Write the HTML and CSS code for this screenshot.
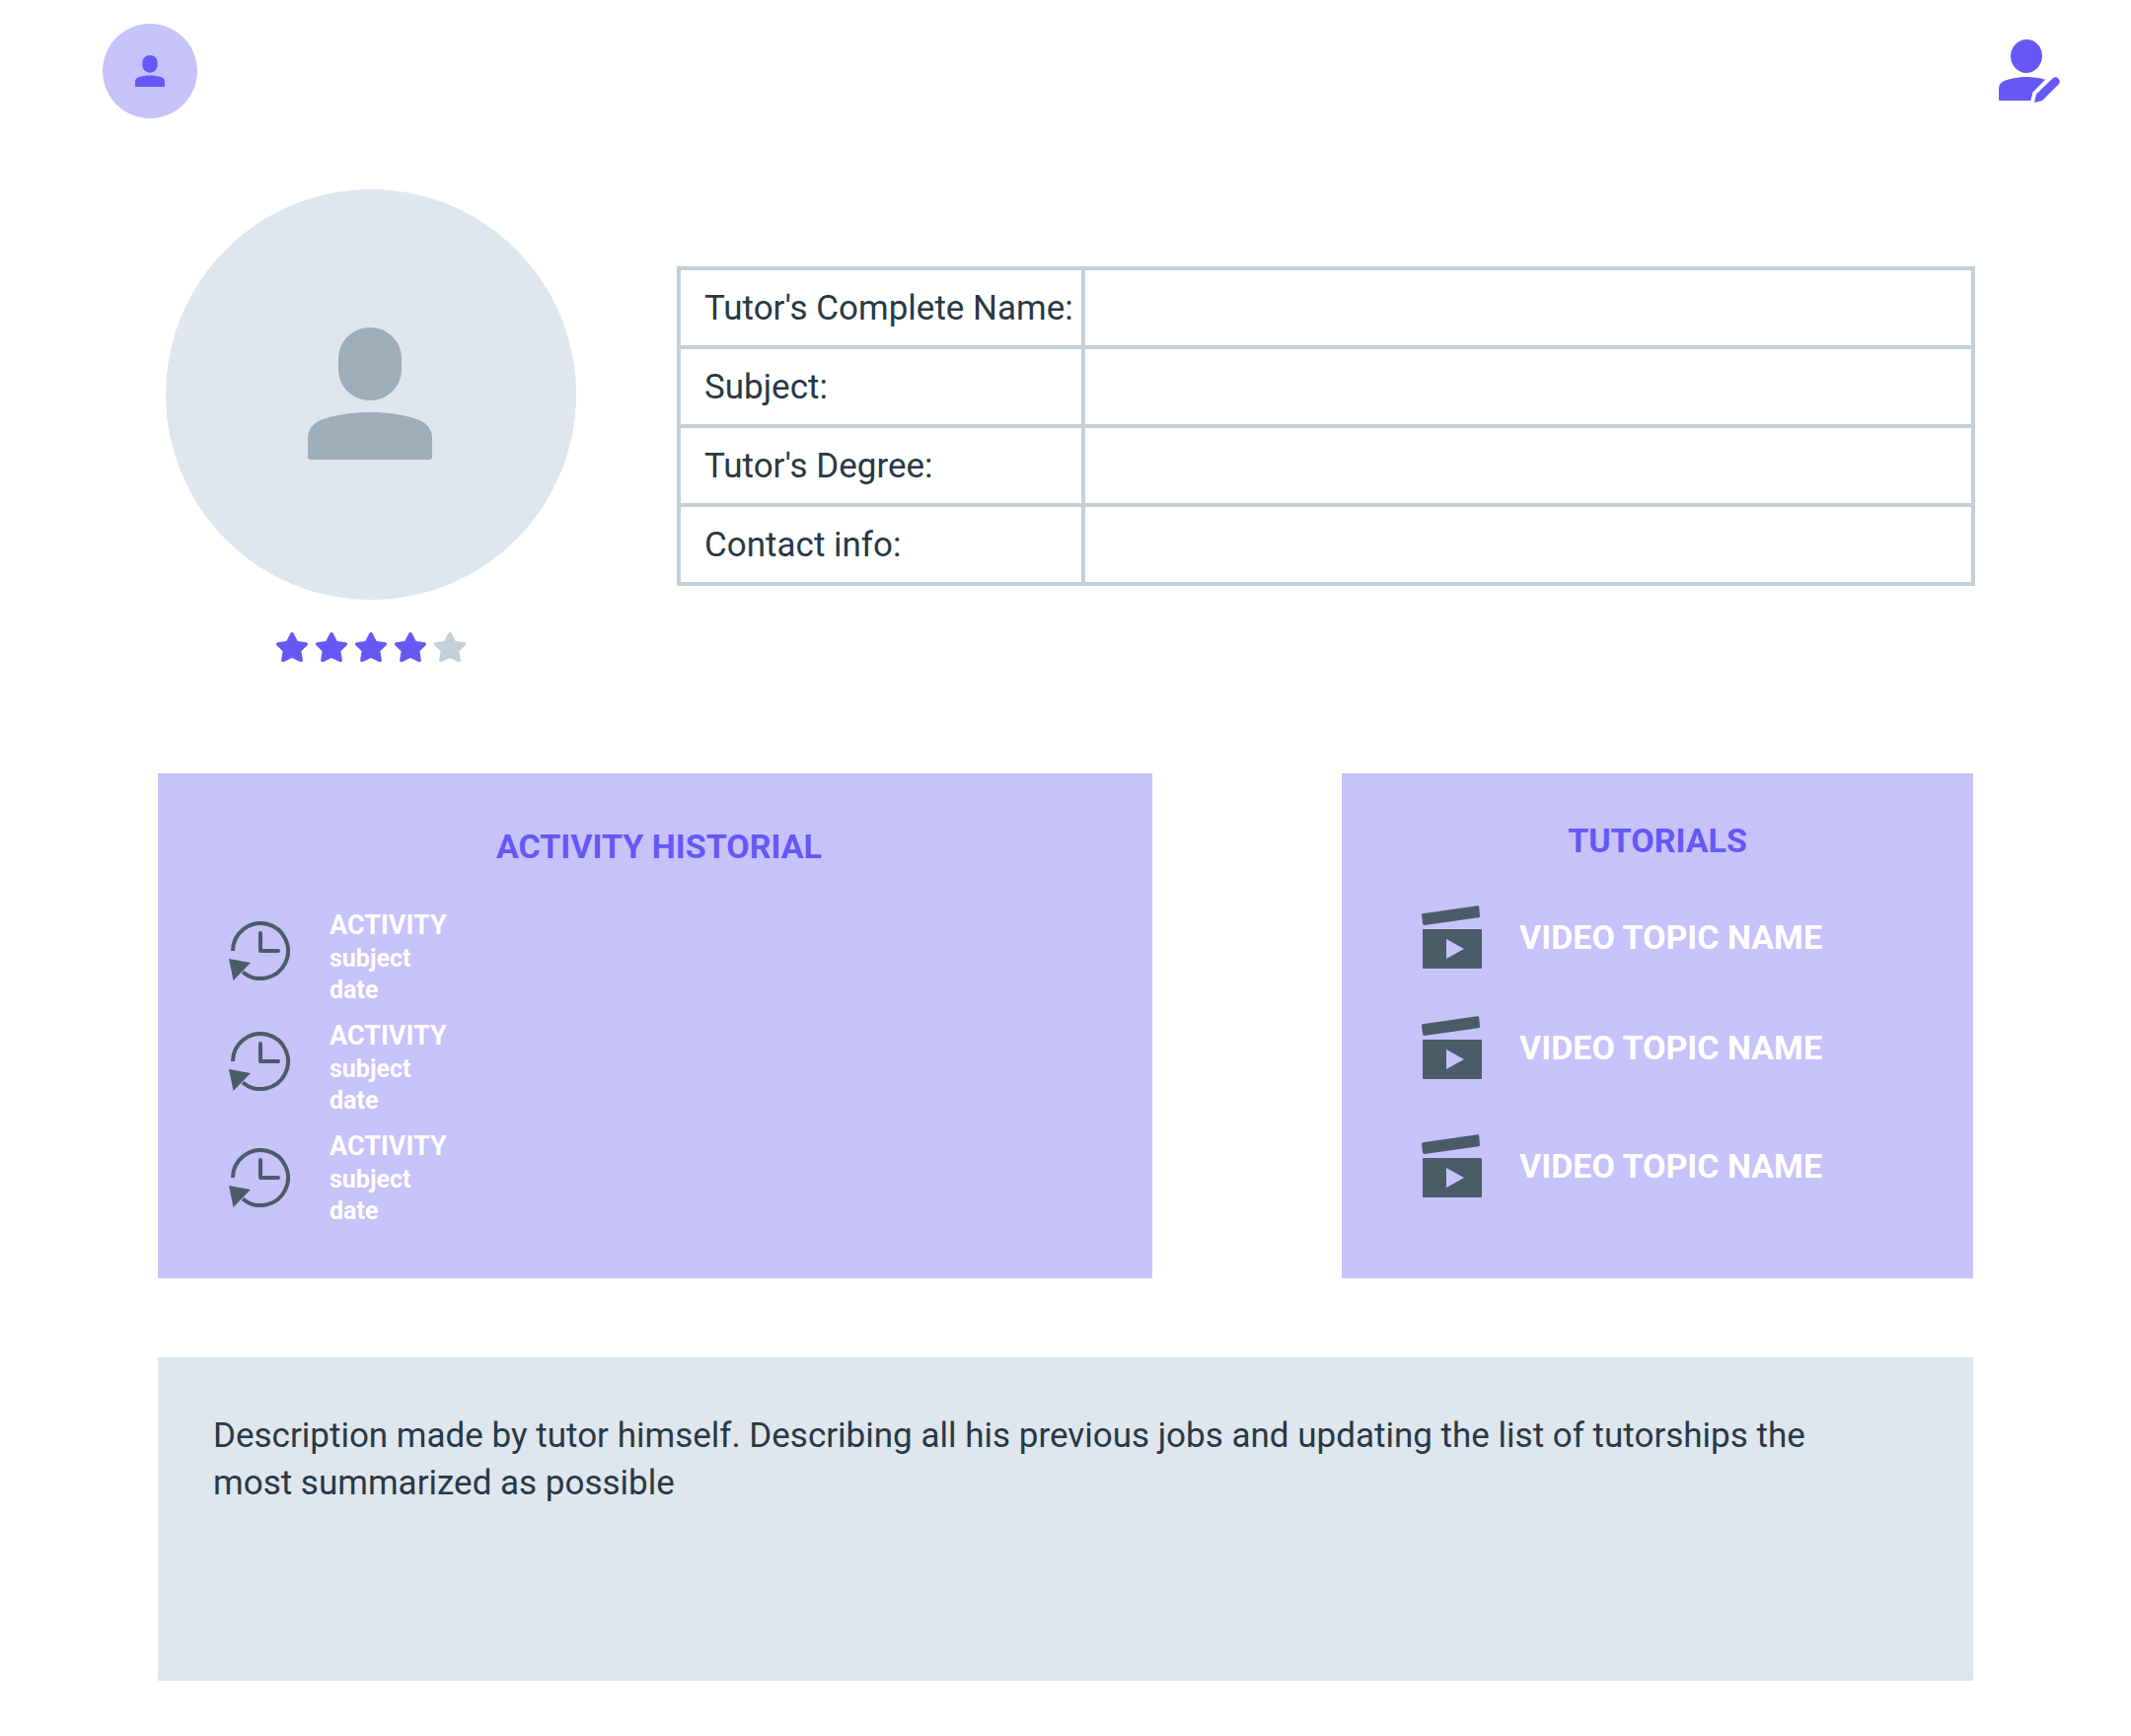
FILE: index.html
```html
<!DOCTYPE html>
<html lang="en">
<head>
  <meta charset="utf-8">
  <meta name="viewport" content="width=device-width, initial-scale=1">
  <title>Tutor profile</title>
  <link rel="stylesheet" href="styles.css">
</head>
<body>
  <svg class="sprite" aria-hidden="true">
    <symbol id="person" viewBox="0 0 126 134">
      <path d="M63 0C81 0 95 14 95 32V42C95 60 81 74 63 74S31 60 31 42V32C31 14 45 0 63 0Z"/>
      <path d="M63 86C82 86 98 88.500 112 93.500C121 97 126 104 126 112V131Q126 134 123 134H3Q0 134 0 131V112C0 104 5 97 14 93.500C28 88.500 44 86 63 86Z"/>
    </symbol>
    <symbol id="star" viewBox="0 0 32 30">
      <path d="M14.4 1Q16 -1 17.600 1L21.700 9L30.400 10.200Q33 11 31.500 13.200L25.400 19.200L26.900 28.500Q26.500 30.700 24.300 29.900L16 25.900L7.700 29.900Q5.500 30.700 5.100 28.500L6.600 19.200L0.500 13.200Q-1 11 1.600 10.200L10.300 9Z"/>
    </symbol>
    <symbol id="history" viewBox="0 0 62 60">
      <path d="M4 30A28 28 0 1 1 14 51.500" fill="none" stroke="currentColor" stroke-width="4"/>
      <path d="M32 12V30H50" fill="none" stroke="currentColor" stroke-width="4" stroke-linecap="round" stroke-linejoin="round"/>
      <path d="M0 38L22 42L4.500 60Z"/>
    </symbol>
    <symbol id="video" viewBox="0 0 62 64">
      <path d="M2 8.200L57.500 0.200Q59 0 59.200 1.500L60 10.500Q60.200 12 58.700 12.200L3.800 19.900Q2.300 20 2.100 18.500L1 9.700Q0.900 8.400 2 8.200Z"/>
      <path fill-rule="evenodd" d="M3 24H61Q62 24 62 25V63Q62 64 61 64H3Q2 64 2 63V25Q2 24 3 24ZM26 34V54L44 44Z"/>
    </symbol>
  </svg>

  <header class="topbar">
    <a class="account" href="#profile" aria-label="My account">
      <svg class="account-icon"><use href="#person"/></svg>
    </a>
    <button class="edit" type="button" aria-label="Edit profile">
      <svg class="edit-icon" viewBox="0 0 62 64">
        <path d="M28 0C37 0 44 7.500 44 16.500S37 34 28 34S12 26 12 17S19 0 28 0Z"/>
        <path d="M28 38C35 38 41 39 47 40.700L34.500 53.500L32.300 62H1Q0 62 0 61V50C0 46 2 43.500 5 42.300C11 39.500 20 38 28 38Z"/>
        <path d="M38 55.500L54.800 39.200A4.300 4.300 0 0 1 60.800 45.200L44 62L36 64Z"/>
      </svg>
    </button>
  </header>

  <main class="page" id="profile">
    <section class="profile">
      <div class="identity">
        <div class="avatar"><svg class="avatar-icon" role="img" aria-label="Tutor photo"><use href="#person"/></svg></div>
        <div class="rating" role="img" aria-label="4 out of 5 stars">
          <svg class="star"><use href="#star"/></svg>
          <svg class="star"><use href="#star"/></svg>
          <svg class="star"><use href="#star"/></svg>
          <svg class="star"><use href="#star"/></svg>
          <svg class="star star-empty"><use href="#star"/></svg>
        </div>
      </div>
      <table class="details">
        <tr><th scope="row">Tutor's Complete Name:</th><td></td></tr>
        <tr><th scope="row">Subject:</th><td></td></tr>
        <tr><th scope="row">Tutor's Degree:</th><td></td></tr>
        <tr><th scope="row">Contact info:</th><td></td></tr>
      </table>
    </section>

    <div class="cards">
      <section class="card">
        <h2 class="card-title history-title">ACTIVITY HISTORIAL</h2>
        <ul class="history-list">
          <li class="activity">
            <svg class="history-icon"><use href="#history"/></svg>
            <div><h3 class="activity-name">ACTIVITY</h3><p class="activity-meta">subject</p><p class="activity-meta">date</p></div>
          </li>
          <li class="activity">
            <svg class="history-icon"><use href="#history"/></svg>
            <div><h3 class="activity-name">ACTIVITY</h3><p class="activity-meta">subject</p><p class="activity-meta">date</p></div>
          </li>
          <li class="activity activity-last">
            <svg class="history-icon"><use href="#history"/></svg>
            <div><h3 class="activity-name">ACTIVITY</h3><p class="activity-meta">subject</p><p class="activity-meta">date</p></div>
          </li>
        </ul>
      </section>
      <section class="card">
        <h2 class="card-title">TUTORIALS</h2>
        <ul class="video-list">
          <li class="video"><svg class="video-icon"><use href="#video"/></svg><h3 class="video-name">VIDEO TOPIC NAME</h3></li>
          <li class="video"><svg class="video-icon"><use href="#video"/></svg><h3 class="video-name">VIDEO TOPIC NAME</h3></li>
          <li class="video video-last"><svg class="video-icon"><use href="#video"/></svg><h3 class="video-name">VIDEO TOPIC NAME</h3></li>
        </ul>
      </section>
    </div>

    <section class="description">
      <p>Description made by tutor himself. Describing all his previous jobs and updating the list of tutorships the most summarized as possible</p>
    </section>
  </main>
</body>
</html>
```

FILE: styles.css
```css
:root {
  --purple: #6558f5;
  --lilac: #c7c2fa;
  --ink: #293845;
  --slate: #4b5c69;
  --line: #c3cfd9;
  --mist: #dfe6ed;
  --grey: #9eadba;
}

* { box-sizing: border-box; }

body {
  margin: 0;
  background: #fff;
  color: var(--ink);
  font-family: Roboto, "Liberation Sans", sans-serif;
  font-size: 35px;
  line-height: 48px;
}

h2, h3, p, ul { margin: 0; padding: 0; }
ul { list-style: none; }
svg { display: block; flex: none; fill: currentColor; }
.sprite { position: absolute; width: 0; height: 0; }

.topbar {
  display: flex;
  align-items: center;
  justify-content: space-between;
  padding: 24px 72px 0 104px;
}

.account {
  display: flex;
  align-items: center;
  justify-content: center;
  width: 96px;
  height: 96px;
  border-radius: 50%;
  background: var(--lilac);
  color: var(--purple);
}
.account-icon { width: 30px; height: 32px; }

.edit {
  padding: 0;
  border: 0;
  background: none;
  color: var(--purple);
  cursor: pointer;
}
.edit-icon { width: 62px; height: 64px; }

.page { padding: 72px 160px 56px; }

.profile {
  display: flex;
  align-items: flex-start;
  gap: 102px;
  margin-right: -2px;
  padding-left: 8px;
}

.identity {
  display: flex;
  flex-direction: column;
  align-items: center;
  gap: 33px;
}

.avatar {
  display: flex;
  align-items: center;
  justify-content: center;
  width: 416px;
  height: 416px;
  padding: 0 2px 2px 0;
  border-radius: 50%;
  background: var(--mist);
  color: var(--grey);
}
.avatar-icon { width: 126px; height: 134px; }

.rating { display: flex; gap: 8px; color: var(--purple); }
.star { width: 32px; height: 30px; }
.star-empty { color: var(--line); }

.details {
  flex: 1;
  margin-top: 78px;
  border-collapse: collapse;
  table-layout: fixed;
}
.details th,
.details td {
  height: 80px;
  padding: 0;
  border: 4px solid var(--line);
}
.details th {
  width: 410px;
  padding: 2px 0 0 24px;
  font-weight: 400;
  text-align: left;
  white-space: nowrap;
}

.cards {
  display: grid;
  grid-template-columns: 63fr 40fr;
  gap: 192px;
  margin-top: 113px;
}

.card {
  min-height: 512px;
  padding: 44px 72px 40px;
  background: var(--lilac);
  color: #fff;
}

.card-title {
  color: var(--purple);
  font-size: 34px;
  font-weight: 700;
  text-align: center;
}
.history-title { margin-top: 6px; padding-left: 8px; }

.history-list { margin-top: 32px; }
.activity {
  display: flex;
  align-items: flex-start;
  gap: 40px;
  height: 112px;
  padding-top: 6px;
}
.history-icon {
  width: 62px;
  height: 60px;
  margin-top: 14px;
  color: var(--slate);
}
.activity-last .history-icon { margin-top: 20px; }
.activity-name { font-size: 27px; line-height: 36px; }
.activity-meta { font-size: 25px; font-weight: 700; line-height: 32px; }

.video-list { margin-top: 42px; padding-left: 8px; }
.video {
  display: flex;
  align-items: center;
  gap: 38px;
  height: 64px;
  margin-top: 48px;
}
.video:first-child { margin-top: 0; }
.video-last { margin-top: 56px; }
.video-icon { width: 62px; height: 64px; color: var(--slate); }
.video-name { font-size: 34px; }

.description {
  min-height: 328px;
  margin-top: 80px;
  padding: 56px 112px 56px 56px;
  background: var(--mist);
}
```
